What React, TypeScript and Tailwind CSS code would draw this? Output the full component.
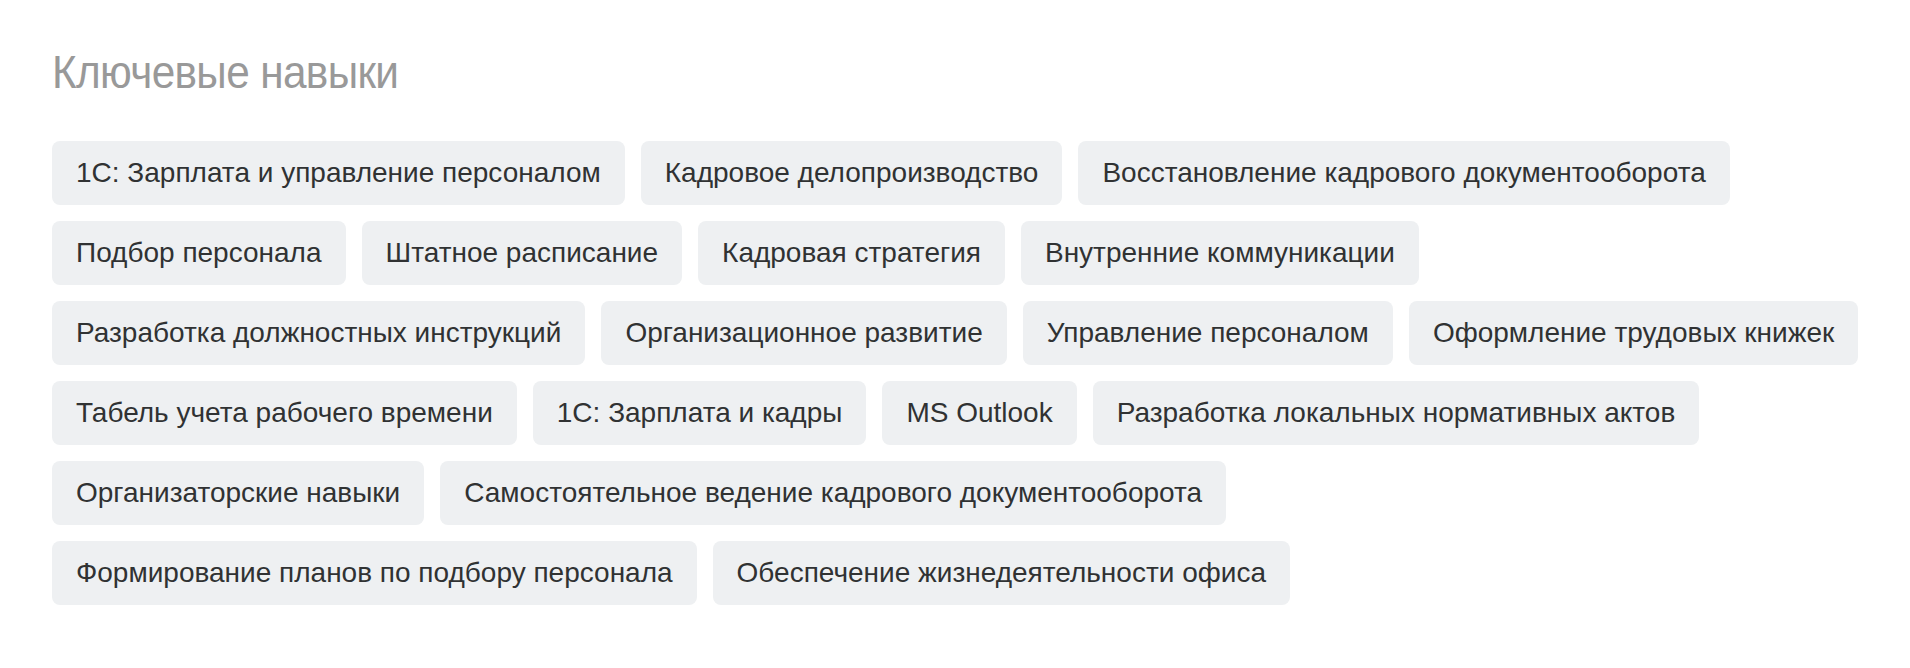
const skills: string[] = [
  "1C: Зарплата и управление персоналом",
  "Кадровое делопроизводство",
  "Восстановление кадрового документооборота",
  "Подбор персонала",
  "Штатное расписание",
  "Кадровая стратегия",
  "Внутренние коммуникации",
  "Разработка должностных инструкций",
  "Организационное развитие",
  "Управление персоналом",
  "Оформление трудовых книжек",
  "Табель учета рабочего времени",
  "1С: Зарплата и кадры",
  "MS Outlook",
  "Разработка локальных нормативных актов",
  "Организаторские навыки",
  "Самостоятельное ведение кадрового документооборота",
  "Формирование планов по подбору персонала",
  "Обеспечение жизнедеятельности офиса",
];

export default function App() {
  return (
    <div
      className="min-h-screen bg-white pl-[52px] pr-[36px] pt-[44px]"
      style={{ fontFamily: '"Liberation Sans", Arial, sans-serif' }}
    >
      <h2 className="inline-block origin-left scale-x-[0.9] text-[47px] leading-[56px] tracking-[-0.7px] text-[#999999]">
        Ключевые навыки
      </h2>
      <div className="mt-[41px] flex flex-wrap gap-x-[16px] gap-y-[16px]">
        {skills.map((skill) => (
          <div
            key={skill}
            className="flex h-[64px] items-center rounded-[8px] bg-[#eef0f2] px-[24px] text-[28px] text-[#303233]"
          >
            {skill}
          </div>
        ))}
      </div>
    </div>
  );
}
